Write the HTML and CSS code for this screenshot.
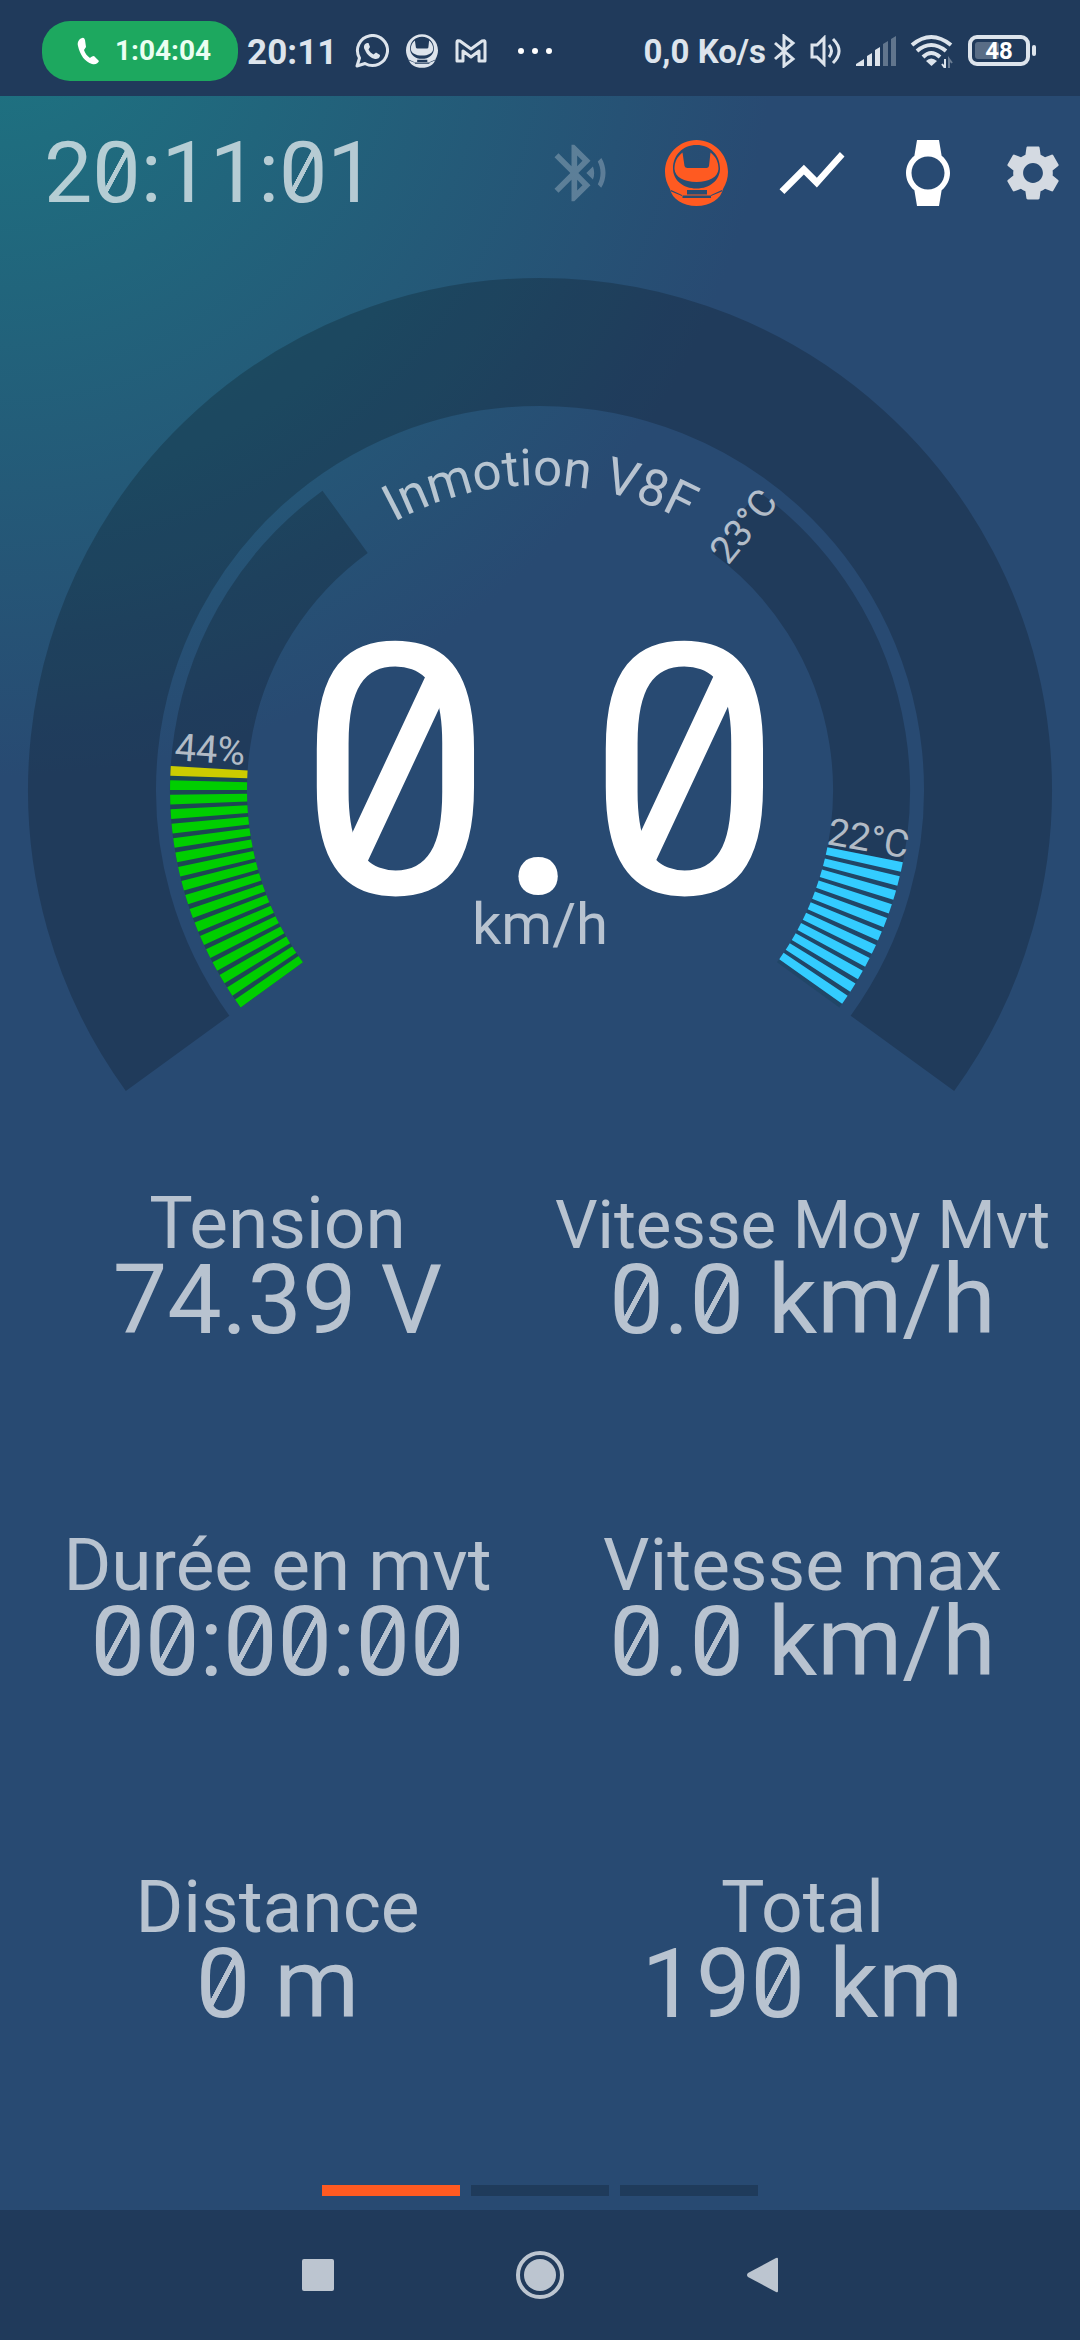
FILE: index.html
```html
<!DOCTYPE html>
<html lang="fr">
  <head>
    <meta charset="UTF-8" />
    <meta name="viewport" content="width=device-width, initial-scale=1.0" />
    <title>Inmotion V8F</title>
    <link rel="stylesheet" href="styles.css" />
  </head>
  <body>
    <svg width="0" height="0" class="defs">
      <symbol id="wheel" viewBox="0 0 63 66">
        <path fill="currentColor" fill-rule="evenodd" d="M31.500 0C48.500 0 63 14 63 32C63 38 61 44 58 49C56 59 45 66 31.500 66C18 66 7 59 5 49C2 44 0 38 0 32C0 14 14.500 0 31.500 0ZM31.500 5C17.500 5 8 15.500 8 28.500C8 40 18 48.500 31.500 48.500C45 48.500 55 40 55 28.500C55 15.500 45.500 5 31.500 5ZM22 50H42V54.500H22ZM17.500 55.500H46V58H17.500ZM5 49.500L17 55V56L5 51ZM58 49.500L46 55V56L58 51Z" />
        <path fill="currentColor" d="M17.500 12.500C12 17 9.500 22 9.500 29C10 37 19 42 31.500 42C44 42 53 37 53.500 29C53.500 22 51 17 45.500 12.500L44 26Q43.500 28 41.500 28H22.500Q20 28 19.500 26Z" />
      </symbol>
    </svg>

    <div class="status-bar">
      <div class="call-pill">
        <svg class="phone" viewBox="0 0 22 28" fill="#fff"><path d="M5 1C2 2 0 5 1 9C3 18 8 25 15 27C19 28 21 26 22 24L17 19C15 19 14 20 13 21C10 19 8 16 7 13L9 10L8 3Q7 0 5 1Z" /></svg>
        <span>1:04:04</span>
      </div>
      <span class="status-time">20:11</span>
      <div class="notifications">
        <svg width="34" height="34" viewBox="0 0 34 34" fill="none" stroke="currentColor" stroke-width="3">
          <path d="M2 32L4.500 24A15 15 0 1 1 10 29.500Z" stroke-linejoin="round" />
          <path fill="currentColor" stroke="none" d="M12 9C9 10 8 13 10 16C12 21 16 24 20 25C23 25 25 24 25 21L21 18.500L18.500 20.500C16.500 19.500 14.500 17.500 13.500 15.500L15 13L13.500 9Z" />
        </svg>
        <svg width="32" height="34"><use href="#wheel" /></svg>
        <svg width="32" height="24" viewBox="0 0 32 24" fill="none" stroke="currentColor" stroke-width="3" stroke-linejoin="round">
          <path d="M2 22V3Q2 1 5 2L16 10L27 2Q30 1 30 3V22H24V12L16 18L8 12V22Z" />
        </svg>
      </div>
      <svg class="more" width="36" height="8" viewBox="0 0 36 8" fill="#fff"><circle cx="4" cy="4" r="3" /><circle cx="18" cy="4" r="3" /><circle cx="32" cy="4" r="3" /></svg>

      <div class="status-right">
        <span class="network-speed">0,0 Ko/s</span>
        <svg width="22" height="34" viewBox="0 0 22 34" fill="none" stroke="currentColor" stroke-width="3"><path d="M1 9L19 25L10 32V2L19 9L1 25" /></svg>
        <svg width="32" height="32" viewBox="0 0 32 32" fill="none" stroke="currentColor" stroke-width="3"><path d="M2 10H7L14 3V29L7 22H2Z" /><path d="M19 10Q24 16 19 22M23 4Q35 16 23 28" /></svg>
        <svg width="40" height="30" viewBox="0 0 40 30" fill="currentColor"><path d="M0 30V28L8 23V30ZM11 30V20L16 17V30ZM19 30V14L24 11V30Z" /><path opacity=".35" d="M27 30V8L32 5V30ZM35 30V3L40 0V30Z" /></svg>
        <svg width="44" height="34" viewBox="0 0 44 34" fill="none" stroke="currentColor" stroke-width="4"><path d="M2 11Q21 -5 41 11M7 17Q21 5 36 17M13 23Q21 15 30 23" /><path fill="currentColor" stroke="none" d="M16 27Q21 22 27 27L21.500 32Z" /><path stroke-width="2" d="M35 25V34L32 30" /><path stroke-width="2" opacity=".4" d="M39 34V25L42 29" /></svg>
        <svg width="70" height="32" viewBox="0 0 70 32">
          <rect x="2" y="2" width="58" height="27" rx="7" fill="none" stroke="currentColor" stroke-width="4" />
          <rect x="7" y="7" width="24" height="17" rx="3" fill="currentColor" opacity=".3" />
          <rect x="64" y="10" width="4" height="11" rx="2" fill="currentColor" />
          <text x="31" y="24" class="battery-text">48</text>
        </svg>
      </div>
    </div>

    <header>
      <h1 class="clock">2<span class="zero">0</span>:11:<span class="zero">0</span>1</h1>
      <div class="actions">
        <button class="dim" aria-label="Bluetooth"><svg width="68" height="68" viewBox="0 0 24 24" fill="currentColor"><path d="M14.240 12.010l2.320 2.320c.28-.72.44-1.510.44-2.330 0-.82-.16-1.590-.43-2.310l-2.330 2.320zm5.290-5.300l-1.260 1.260c.63 1.210.98 2.570.98 4.020s-.36 2.820-.98 4.020l1.200 1.200c.97-1.540 1.540-3.360 1.540-5.310-.01-1.890-.55-3.670-1.480-5.190zm-3.820 1L10 2H9v7.590L4.410 5 3 6.410 8.590 12 3 17.590 4.410 19 9 14.410V22h1l5.710-5.710-4.300-4.290 4.300-4.290zM11 5.830l1.880 1.880L11 9.590V5.830zm1.880 10.460L11 18.170v-3.760l1.880 1.880z" /></svg></button>
        <button class="wheel-btn" aria-label="Roue"><svg width="63" height="66"><use href="#wheel" /></svg></button>
        <button aria-label="Graphique"><svg width="78" height="78" viewBox="0 0 24 24" fill="currentColor"><path d="M3.500 18.490l6-6.010 4 4L22 6.920l-1.410-1.410-7.090 7.970-4-4L2 16.990z" /></svg></button>
        <button aria-label="Montre"><svg width="66" height="66" viewBox="0 0 24 24" fill="currentColor"><path d="M20 12c0-2.540-1.190-4.810-3.040-6.270L16 0H8l-.95 5.730C5.190 7.190 4 9.450 4 12s1.190 4.810 3.050 6.270L8 24h8l.96-5.730C18.810 16.810 20 14.540 20 12zM6 12c0-3.310 2.690-6 6-6s6 2.690 6 6-2.690 6-6 6-6-2.690-6-6z" /></svg></button>
        <button class="settings" aria-label="Réglages"><svg width="66" height="66" viewBox="0 0 24 24" fill="currentColor"><path d="M19.140 12.940c.04-.3.06-.61.06-.94 0-.32-.02-.64-.07-.94l2.030-1.580c.18-.14.23-.41.12-.61l-1.920-3.320c-.12-.22-.37-.29-.59-.22l-2.390.96c-.5-.38-1.030-.7-1.620-.94l-.36-2.540c-.04-.24-.24-.41-.48-.41h-3.840c-.24 0-.43.17-.47.41l-.36 2.540c-.59.24-1.130.57-1.620.94l-2.390-.96c-.22-.08-.47 0-.59.22L2.740 8.870c-.12.21-.08.47.12.61l2.030 1.580c-.05.3-.09.63-.09.94s.02.64.07.94l-2.030 1.580c-.18.14-.23.41-.12.61l1.920 3.320c.12.22.37.29.59.22l2.390-.96c.5.38 1.030.7 1.620.94l.36 2.540c.05.24.24.41.48.41h3.840c.24 0 .44-.17.47-.41l.36-2.540c.59-.24 1.130-.56 1.620-.94l2.390.96c.22.08.47 0 .59-.22l1.920-3.320c.12-.22.07-.47-.12-.61l-2.010-1.580zM12 15.600c-1.980 0-3.600-1.620-3.600-3.600s1.620-3.600 3.600-3.600 3.600 1.620 3.600 3.600-1.620 3.600-3.600 3.600z" /></svg></button>
      </div>
    </header>

    <main>
      <svg class="gauge" viewBox="0 0 1080 850" fill="none">
        <!-- speed track -->
        <path class="track speed-track" d="M177.600 803.300A448 448 0 1 1 902.400 803.300" />
        <!-- battery and temperature tracks -->
        <path class="track" d="M271.800 734.900A331.500 331.500 0 0 1 345.100 271.800" />
        <path class="track" d="M734.900 271.800A331.500 331.500 0 0 1 808.200 734.900" />

        <!-- battery level -->
        <path class="bars green tint" d="M271.800 734.900A331.500 331.500 0 0 1 209.200 518.300" />
        <path class="bars green dashed" pathLength="1700" d="M271.800 734.900A331.500 331.500 0 0 1 208.800 527" />
        <path class="bars yellow" d="M208.800 527A331.500 331.500 0 0 1 209.200 518.300" />
        <text class="gauge-small" transform="translate(174 510) rotate(4)">44%</text>

        <!-- temperature level -->
        <path class="bars blue tint" d="M808.200 734.900A331.500 331.500 0 0 0 865.100 604.700" />
        <path class="bars blue dashed from-gap" pathLength="1100" d="M808.200 734.900A331.500 331.500 0 0 0 865.100 604.700" />
        <text class="gauge-small" transform="translate(826 594) rotate(10)">22°C</text>
        <text class="gauge-small" transform="translate(728 316) rotate(-51)">23°C</text>

        <path id="name-arc" d="M235 540A305 305 0 0 1 845 540" />
        <text class="gauge-name"><textPath href="#name-arc" startOffset="50%">Inmotion V8F</textPath></text>

        <text class="speed" x="540" y="643">0.0</text>
        <path class="speed-slash" d="M353 612L439 428M641 612L727 428" />
        <text class="speed-unit" x="540" y="694">km/h</text>
      </svg>

      <dl class="stats">
        <div class="stat">
          <dt>Tension</dt>
          <dd>74.39 V</dd>
        </div>
        <div class="stat">
          <dt class="long">Vitesse Moy Mvt</dt>
          <dd><span class="zero">0</span>.<span class="zero">0</span> km/h</dd>
        </div>
        <div class="stat">
          <dt>Durée en mvt</dt>
          <dd><span class="zero">0</span><span class="zero">0</span>:<span class="zero">0</span><span class="zero">0</span>:<span class="zero">0</span><span class="zero">0</span></dd>
        </div>
        <div class="stat">
          <dt>Vitesse max</dt>
          <dd><span class="zero">0</span>.<span class="zero">0</span> km/h</dd>
        </div>
        <div class="stat">
          <dt>Distance</dt>
          <dd><span class="zero">0</span> m</dd>
        </div>
        <div class="stat">
          <dt>Total</dt>
          <dd>19<span class="zero">0</span> km</dd>
        </div>
      </dl>

      <div class="pager">
        <button class="active" aria-label="Page 1"></button>
        <button aria-label="Page 2"></button>
        <button aria-label="Page 3"></button>
      </div>
    </main>

    <nav>
      <button aria-label="Applications"><svg width="32" height="32"><rect width="32" height="32" rx="2" fill="currentColor" /></svg></button>
      <button aria-label="Accueil"><svg width="50" height="50" viewBox="0 0 50 50"><circle cx="25" cy="25" r="22" fill="none" stroke="currentColor" stroke-width="4" /><circle cx="25" cy="25" r="16" fill="currentColor" /></svg></button>
      <button aria-label="Retour"><svg width="32" height="36" viewBox="0 0 32 36"><path d="M30 1Q32 0 32 2V34Q32 36 30 35L2 20Q0 18 2 16Z" fill="currentColor" /></svg></button>
    </nav>
  </body>
</html>
```
FILE: styles.css
```css
* {
  padding: 0;
  margin: 0;
  box-sizing: border-box;
}

body {
  min-height: 100vh;
  display: flex;
  flex-direction: column;
  background: radial-gradient(circle at 0 0, #1d7582, #284a72 776px);
  background-color: #284a72;
  color: white;
  font-family: Roboto, "Liberation Sans", sans-serif;
}

svg {
  display: block;
  flex-shrink: 0;
}

.defs {
  position: absolute;
}

button {
  display: flex;
  justify-content: center;
  align-items: center;
  border: none;
  background: none;
  color: inherit;
  cursor: pointer;
}

/* status bar */
.status-bar {
  min-height: 96px;
  padding: 0 42px;
  display: flex;
  align-items: center;
  background-color: #203a5b;
  color: #dde4ec;
  font-weight: 700;
  white-space: nowrap;
}

.call-pill {
  display: flex;
  align-items: center;
  gap: 16px;
  height: 60px;
  padding: 0 27px 0 35px;
  margin: 5px 9px 0 0;
  border-radius: 28px;
  background-color: #1da85f;
  color: #eafff2;
  font-size: 28px;
}

.phone {
  width: 22px;
  height: 28px;
}

.status-time {
  margin-top: 8px;
  font-size: 35px;
}

.notifications {
  display: flex;
  align-items: center;
  gap: 17px;
  margin: 6px 30px 0 18px;
}

.more {
  margin-top: 6px;
}

.status-right {
  display: flex;
  align-items: center;
  gap: 14px;
  margin-left: auto;
  margin-top: 6px;
}

.network-speed {
  margin-right: -6px;
  font-size: 33px;
}

.battery-text {
  fill: white;
  font-size: 24px;
  text-anchor: middle;
}

/* header */
header {
  display: flex;
  justify-content: space-between;
  align-items: center;
  min-height: 154px;
  padding-left: 44px;
}

.clock {
  font-size: 86px;
  line-height: 96px;
  font-weight: 400;
  opacity: 0.67;
}

.actions {
  display: flex;
}

.actions button {
  width: 116px;
  height: 96px;
}

.actions .settings {
  width: 94px;
  opacity: 0.8;
}

.actions .dim {
  opacity: 0.25;
}

.wheel-btn {
  color: #ff5a21;
}

/* slashed zero */
.zero {
  background-image: linear-gradient(
    to bottom right,
    transparent 44%,
    white 45%,
    white 55%,
    transparent 56%
  );
  background-repeat: no-repeat;
  background-size: 50% 45%;
  background-position: 50% 48%;
}

/* gauge */
main {
  flex: 1;
  display: flex;
  flex-direction: column;
}

.gauge {
  width: 100%;
}

.gauge text {
  fill: white;
}

.track {
  stroke: black;
  stroke-opacity: 0.2;
  stroke-width: 77px;
}

.speed-track {
  stroke-width: 128px;
}

.bars {
  stroke-width: 77px;
}

.green {
  stroke: #00ce00;
}

.yellow {
  stroke: #cccc00;
}

.blue {
  stroke: #33ccff;
}

.tint {
  opacity: 0.08;
}

.dashed {
  stroke-dasharray: 67 33;
}

.from-gap {
  stroke-dashoffset: 67px;
}

.gauge .gauge-small,
.gauge .gauge-name,
.gauge .speed-unit {
  fill-opacity: 0.67;
}

.gauge-small {
  font-size: 38px;
}

.gauge-name {
  font-size: 51px;
  text-anchor: middle;
}

.speed {
  font-size: 350px;
  text-anchor: middle;
}

.speed-slash {
  stroke: white;
  stroke-width: 26px;
}

.speed-unit {
  font-size: 58px;
  text-anchor: middle;
}

/* stats */
.stats {
  display: grid;
  grid-template-columns: 1fr 1fr;
  row-gap: 188px;
  padding: 0 15px;
  margin-top: 85px;
}

.stat {
  text-align: center;
  white-space: nowrap;
  opacity: 0.67;
}

.stat dt {
  font-size: 73px;
  line-height: 76px;
}

.stat .long {
  padding-top: 4px;
  font-size: 67px;
  line-height: 72px;
}

.stat dd {
  font-size: 97px;
  line-height: 78px;
}

.pager {
  display: flex;
  justify-content: center;
  gap: 11px;
  margin-top: auto;
  padding-bottom: 14px;
}

.pager button {
  width: 138px;
  height: 11px;
  background-color: #1f3b5b;
}

.pager .active {
  background-color: #ff5a21;
}

/* bottom navigation */
nav {
  display: flex;
  justify-content: center;
  gap: 122px;
  min-height: 130px;
  background-color: #203a5b;
  color: #bcc5d0;
}

nav button {
  width: 100px;
}
```
